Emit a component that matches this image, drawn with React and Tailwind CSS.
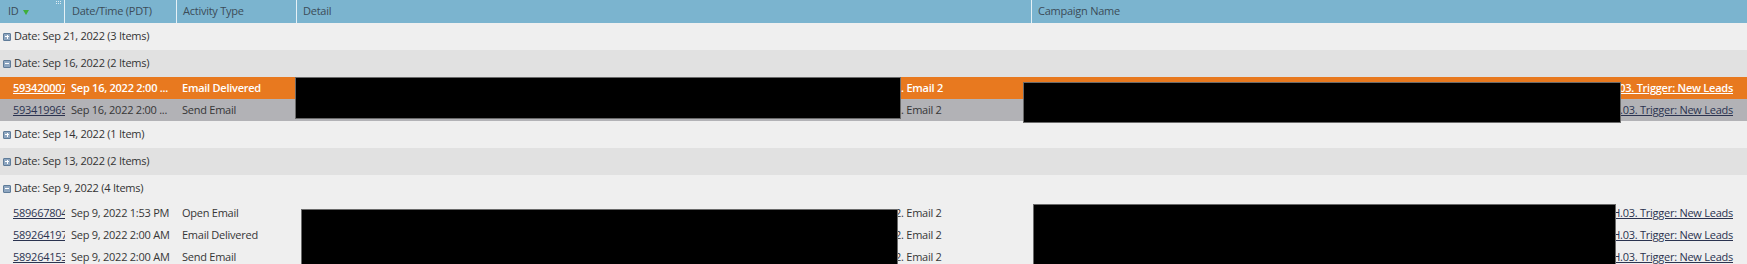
import { Fragment } from 'react';

const font = { fontFamily: '"Open Sans", "Noto Sans", sans-serif' };

// Expand / collapse toggle shown in front of each date group
const Toggle = ({ open }) => (
  <span className="relative inline-block w-[8px] h-[8px] bg-[#8ea6c0] border border-[#5f7c99] rounded-[1px] shrink-0">
    <span className="absolute left-[1px] right-[1px] top-[2.5px] h-[1px] bg-white" />
    {!open && <span className="absolute top-[1px] bottom-[1px] left-[2.5px] w-[1px] bg-white" />}
  </span>
);

const GroupRow = ({ label, open, dark }) => (
  <div className={`h-[27px] flex items-center pl-[3px] gap-[3px] text-[11px] tracking-[-0.25px] text-[#333333] ${dark ? 'bg-[#e1e1e1]' : 'bg-[#efefef]'}`}>
    <Toggle open={open} />
    <span>{label}</span>
  </div>
);

const DataRow = ({ row, variant }) => {
  const selected = variant === 'orange';
  const bg = selected ? 'bg-[#e8791f]' : variant === 'gray' ? 'bg-[#b2b2b6]' : 'bg-[#efefef]';
  const text = selected ? 'text-white font-semibold' : 'text-[#363636]';
  const link = selected ? 'text-white' : 'text-[#2b3350]';
  return (
    <div className={`h-[22px] flex items-center text-[11px] tracking-[-0.25px] whitespace-nowrap ${bg} ${text}`}>
      <div className="w-[65px] pl-[13px] pr-[2px] overflow-hidden">
        <span className={`underline ${link}`}>{row.id}</span>
      </div>
      <div className="w-[112px] pl-[6px] overflow-hidden">{row.date}</div>
      <div className="w-[120px] pl-[5px] overflow-hidden">{row.type}</div>
      <div className="w-[735px] overflow-hidden">
        <span className="inline-block w-[598px]" />
        <span>2. Email 2</span>
      </div>
      <div className="flex-1 flex justify-end pr-[14px] overflow-hidden">
        <span className={`underline ${link}`}>H.03. Trigger: New Leads</span>
      </div>
    </div>
  );
};

const Redact = ({ className }) => (
  <div className={`absolute bg-black border border-[#6a6a6a] z-10 ${className}`} />
);

const App = () => {
  const cols = [
    { label: 'ID', w: 'w-[65px]', pl: 'pl-[8px]' },
    { label: 'Date/Time (PDT)', w: 'w-[112px]', pl: 'pl-[7px]' },
    { label: 'Activity Type', w: 'w-[120px]', pl: 'pl-[6px]' },
    { label: 'Detail', w: 'w-[735px]', pl: 'pl-[6px]' },
  ];

  return (
    <div className="w-[1747px] h-[264px] overflow-hidden bg-[#efefef]" style={font}>
      {/* Header */}
      <div className="h-[23px] flex bg-[#7bb4cf] text-[11px] tracking-[-0.25px] text-[#3b4c58]">
        {cols.map((c, i) => (
          <div key={c.label} className={`${c.w} ${c.pl} relative flex items-center border-r border-[#e6f1f6]`}>
            <span>{c.label}</span>
            {i === 0 && (
              <>
                <svg width="6" height="5" viewBox="0 0 6 5" className="ml-[4px] mt-[2px]">
                  <path d="M0 0h6L3 5z" fill="#3fae3a" />
                </svg>
                <span className="absolute right-[3px] top-[1px] grid grid-cols-3 gap-[1px]">
                  {[0, 1, 2, 3, 4, 5].map((d) => (
                    <span key={d} className="w-[1px] h-[1px] bg-[#dceaf2]" />
                  ))}
                </span>
              </>
            )}
          </div>
        ))}
        <div className="flex-1 pl-[6px] flex items-center">Campaign Name</div>
      </div>

      <GroupRow label="Date: Sep 21, 2022 (3 Items)" />
      <GroupRow label="Date: Sep 16, 2022 (2 Items)" open dark />
      <div className="relative">
        <DataRow variant="orange" row={{ id: '593420007', date: 'Sep 16, 2022 2:00 ...', type: 'Email Delivered' }} />
        <DataRow variant="gray" row={{ id: '593419965', date: 'Sep 16, 2022 2:00 ...', type: 'Send Email' }} />
        <Redact className="left-[295px] top-0 w-[606px] h-[42px]" />
        <Redact className="left-[1023px] top-[5px] w-[598px] h-[41px]" />
      </div>
      <GroupRow label="Date: Sep 14, 2022 (1 Item)" />
      <GroupRow label="Date: Sep 13, 2022 (2 Items)" dark />
      <GroupRow label="Date: Sep 9, 2022 (4 Items)" open />
      <div className="relative">
        {[
          { id: '589667804', date: 'Sep 9, 2022 1:53 PM', type: 'Open Email' },
          { id: '589264197', date: 'Sep 9, 2022 2:00 AM', type: 'Email Delivered' },
          { id: '589264153', date: 'Sep 9, 2022 2:00 AM', type: 'Send Email' },
        ].map((r) => (
          <Fragment key={r.id}>
            <DataRow row={r} />
          </Fragment>
        ))}
        <Redact className="left-[301px] top-[7px] w-[597px] h-[70px]" />
        <Redact className="left-[1033px] top-[2px] w-[583px] h-[75px]" />
      </div>
    </div>
  );
};

export default App;
